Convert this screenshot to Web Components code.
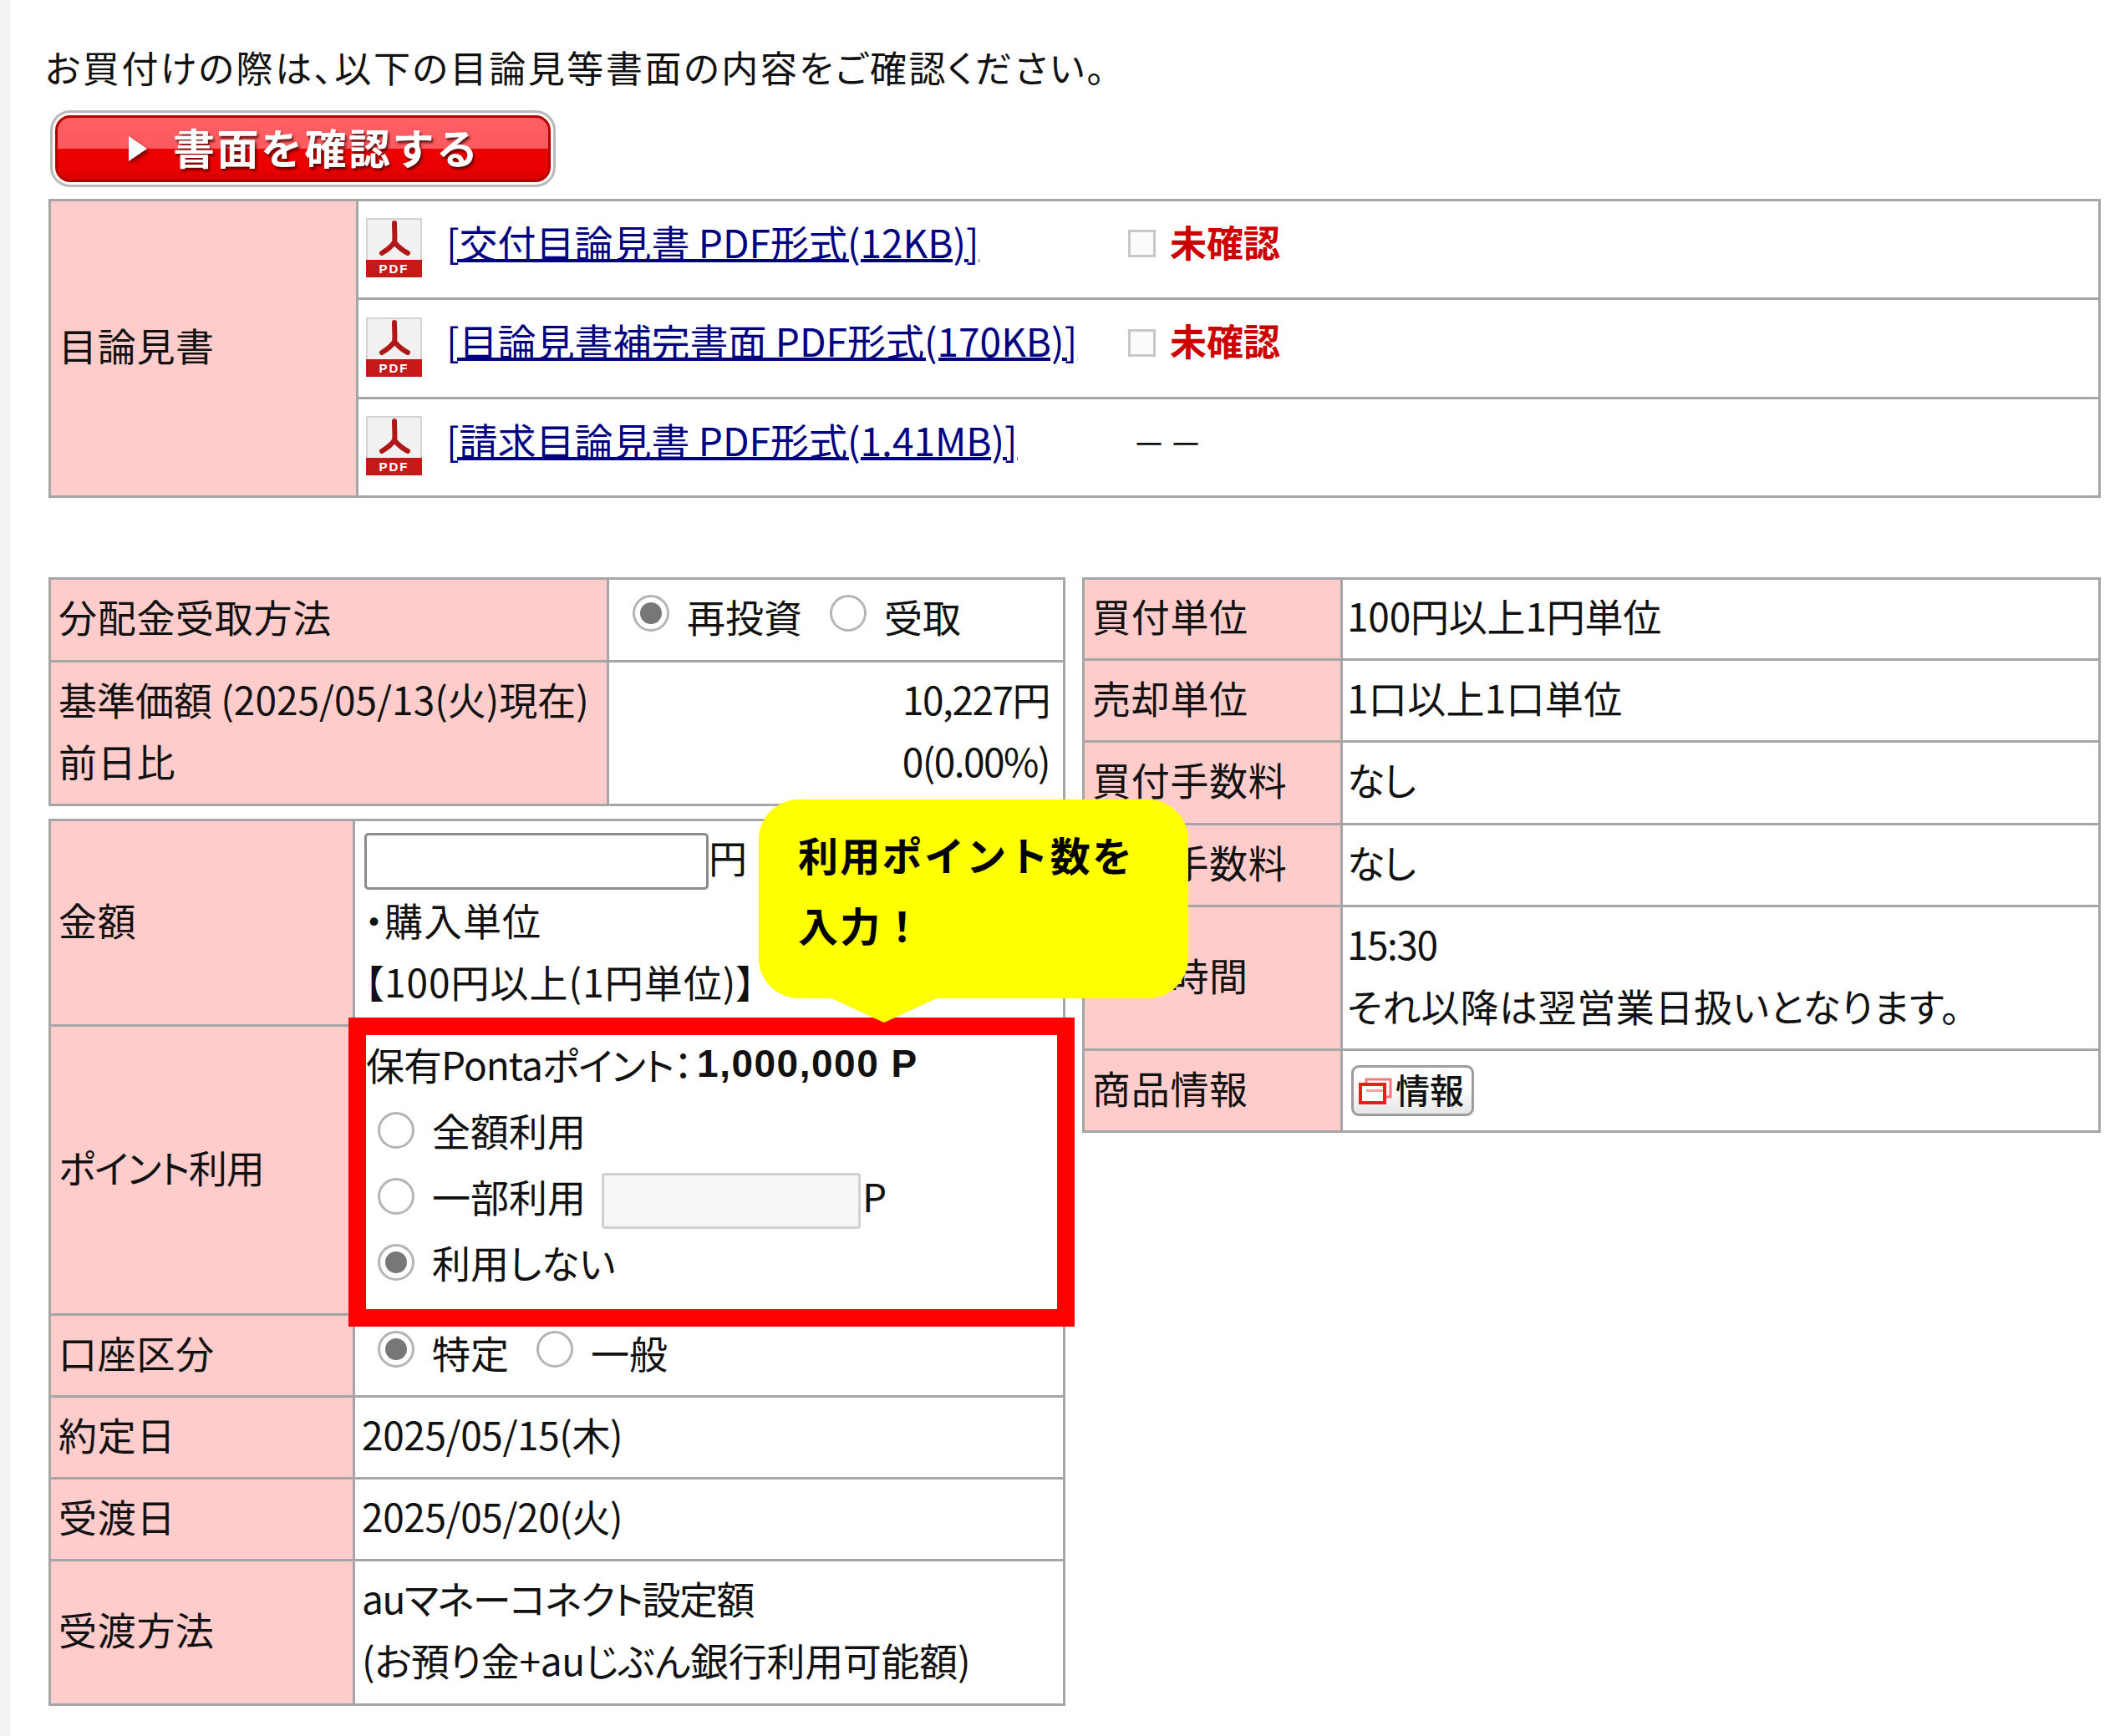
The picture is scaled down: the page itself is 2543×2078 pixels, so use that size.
<!DOCTYPE html>
<html lang="ja">
<head>
<meta charset="utf-8">
<title>書面確認</title>
<style>
  html, body { margin: 0; background: #fff; }
</style>
</head>
<body>
<purchase-page>
  <notice-line>お買付けの際は、以下の目論見等書面の内容をご確認ください。</notice-line>
  <confirm-button>書面を確認する</confirm-button>

  <data-table style="--label-w:368px">
    <data-row h="355" flush>
      <span slot="label">目論見書</span>
      <doc-line h="118" status="unread">[交付目論見書 PDF形式(12KB)]</doc-line>
      <doc-line h="119" status="unread">[目論見書補完書面 PDF形式(170KB)]</doc-line>
      <doc-line h="115" status="none" last>[請求目論見書 PDF形式(1.41MB)]</doc-line>
    </data-row>
  </data-table>

  <two-columns slot="columns">
    <column-stack slot="left">
      <data-table style="--label-w:668px">
        <data-row h="99">
          <span slot="label">分配金受取方法</span>
          <option-group style="--first:20px;--next:33px">
            <radio-option checked>再投資</radio-option>
            <radio-option>受取</radio-option>
          </option-group>
        </data-row>
        <data-row h="172" end>
          <span slot="label"><tight-text style="--ls:0">基準価額 (2025/05/13(火)現在)</tight-text><br>前日比</span>
          <tight-text>10,227円</tight-text>
          <tight-text>0(0.00%)</tight-text>
        </data-row>
      </data-table>
      <data-table style="--label-w:364px">
        <data-row h="246" flush>
          <span slot="label">金額</span>
          <amount-field>円</amount-field>
          <indent-line>・購入単位</indent-line>
          <indent-line>【100円以上(1円単位)】</indent-line>
        </data-row>
        <data-row h="346" flush>
          <span slot="label"><tight-text style="--ls:-1.3px">ポイント利用</tight-text></span>
          <ponta-points></ponta-points>
        </data-row>
        <data-row h="98">
          <span slot="label">口座区分</span>
          <option-group style="--first:19px;--next:33px">
            <radio-option checked>特定</radio-option>
            <radio-option>一般</radio-option>
          </option-group>
        </data-row>
        <data-row h="98">
          <span slot="label">約定日</span>
          <tight-text style="--ls:-.4px">2025/05/15(木)</tight-text>
        </data-row>
        <data-row h="98">
          <span slot="label">受渡日</span>
          <tight-text style="--ls:-.4px">2025/05/20(火)</tight-text>
        </data-row>
        <data-row h="173">
          <span slot="label">受渡方法</span>
          <tight-text>auマネーコネクト設定額</tight-text>
          <tight-text style="--ls:-.3px">(お預り金+auじぶん銀行利用可能額)</tight-text>
        </data-row>
      </data-table>
    </column-stack>
    <column-stack slot="right">
      <data-table style="--label-w:309px">
        <data-row h="97" tight><span slot="label">買付単位</span><tight-text style="--ls:-.2px">100円以上1円単位</tight-text></data-row>
        <data-row h="98" tight><span slot="label">売却単位</span><tight-text style="--ls:.3px">1口以上1口単位</tight-text></data-row>
        <data-row h="99" tight><span slot="label">買付手数料</span><tight-text>なし</tight-text></data-row>
        <data-row h="98" tight><span slot="label">売却手数料</span><tight-text>なし</tight-text></data-row>
        <data-row h="172" tight>
          <span slot="label">締切時間</span>
          <tight-text>15:30</tight-text>
          <tight-text style="--ls:.6px">それ以降は翌営業日扱いとなります。</tight-text>
        </data-row>
        <data-row h="98" tight><span slot="label">商品情報</span><info-button>情報</info-button></data-row>
      </data-table>
    </column-stack>
  </two-columns>

  <highlight-frame slot="overlay"></highlight-frame>
  <callout-bubble slot="overlay">利用ポイント数を<br>入力！</callout-bubble>
</purchase-page>

<script>
// shared text settings for every table cell
const FONT = `"Noto Sans CJK JP", "Liberation Sans", sans-serif`;
const LINE = '#a6a6a6';

function define(name, css, html, extra = {}) {
    class Comp extends HTMLElement {
        connectedCallback() {
            if (this.shadowRoot) return;
            this.attachShadow({ mode: 'open' });
            const markup = typeof html === 'function' ? html(this) : html;
            this.shadowRoot.innerHTML = `<style>${css}</style>${markup}`;
            if (extra.ready) extra.ready(this);
        }
    }
    customElements.define(name, Comp);
}

define('purchase-page', `
    :host {
        display: block;
        position: relative;
        box-sizing: border-box;
        width: 2543px;
        height: 2078px;
        padding: 33px 29px 0 58px;
        font: 400 46px/74px ${FONT};
        font-feature-settings: "palt";
        color: #111;
        background: #fff;
    }
    .strip { position: absolute; left: 0; top: 0; bottom: 0; width: 13px; background: #f2f2f2; }
    .columns { margin-top: 95px; }
`, `
    <div class="strip"></div>
    <slot></slot>
    <div class="columns"><slot name="columns"></slot></div>
    <slot name="overlay"></slot>
`);

define('notice-line', `
    :host {
        display: block;
        box-sizing: border-box;
        height: 100px;
        padding-bottom: 6px;
        line-height: 94px;
        margin-left: -4px;
        font-size: 44px;
        letter-spacing: 2.6px;
        white-space: nowrap;
    }
`, `<slot></slot>`);

define('confirm-button', `
    :host {
        display: flex;
        align-items: center;
        box-sizing: border-box;
        width: 605px;
        height: 92px;
        margin: -1px 0 14px 2px;
        padding: 3px;
        border: 3px solid #b9b9b9;
        border-radius: 24px;
        background: #fff;
    }
    .face {
        flex: 1;
        display: flex;
        align-items: center;
        height: 100%;
        box-sizing: border-box;
        padding: 0 0 6px 85px;
        border: 3px solid #b80000;
        border-radius: 18px;
        background: linear-gradient(#ff6065 0, #fb5a5e 50%, #ee0000 50%, #e80000 88%, #c80000 100%);
        color: #fff;
        font-weight: 700;
        font-size: 50px;
        letter-spacing: 2.5px;
        text-shadow: 2px 3px 3px rgba(60,0,0,.75);
        font-feature-settings: normal;
    }
    svg { margin: 6px 31px 0 0; filter: drop-shadow(2px 3px 2px rgba(60,0,0,.7)); }
`, `
    <div class="face">
        <svg width="22" height="30" viewBox="0 0 22 30"><path d="M0 0L22 15L0 30Z" fill="#fff"/></svg>
        <slot></slot>
    </div>
`);

define('data-table', `
    :host {
        display: block;
        border: 3px solid ${LINE};
        border-bottom: 0;
        background: #fff;
    }
`, `<slot></slot>`);

define('data-row', `
    :host {
        display: grid;
        grid-template-columns: var(--label-w) 1fr;
        box-sizing: border-box;
        border-bottom: 3px solid ${LINE};
    }
    .label {
        display: flex;
        align-items: center;
        box-sizing: border-box;
        padding: 0 0 10px 9px;
        background: #ffcccc;
        border-right: 3px solid ${LINE};
        text-align: left;
        letter-spacing: .7px;
        white-space: nowrap;
    }
    .value {
        display: flex;
        flex-direction: column;
        justify-content: center;
        box-sizing: border-box;
        padding: 0 8px 10px;
        white-space: nowrap;
    }
    :host([end]) .value { align-items: flex-end; padding-right: 16px; }
    :host([tight]) .value { padding-left: 5px; }
    :host([flush]) .value { justify-content: flex-start; padding: 0; }
`, host => `
    <div class="label" part="label"><slot name="label"></slot></div>
    <div class="value" part="value"><slot></slot></div>
`, { ready: host => { host.style.height = host.getAttribute('h') + 'px'; } });

define('tight-text', `
    :host { letter-spacing: var(--ls, -1.5px); }
`, `<slot></slot>`);

define('indent-line', `
    :host { display: block; padding-left: 11px; letter-spacing: 1px; white-space: nowrap; }
`, `<slot></slot>`);

define('doc-line', `
    :host {
        display: flex;
        align-items: center;
        box-sizing: border-box;
        padding: 0 0 20px 9px;
        border-bottom: 3px solid ${LINE};
    }
    :host([last]) { border-bottom: 0; }
    a { margin-left: 29px; width: 816px; color: #000080; text-decoration: underline; text-underline-offset: 1px; white-space: nowrap; }
    .box { width: 33px; height: 33px; box-sizing: border-box; border: 3px solid #c8c8c8; background: #fbfbfb; margin-right: 17px; margin-top: 6px; }
    .unread { color: #cc0000; font-weight: 700; font-size: 44px; }
    .dash { margin: 7px 0 0 5px; letter-spacing: 4px; font-size: 40px; }
    pdf-icon { margin-top: 16px; }
`, host => {
    const status = host.getAttribute('status');
    host.style.height = host.getAttribute('h') + 'px';
    const tail = status === 'unread'
        ? `<span class="box"></span><span class="unread">未確認</span>`
        : `<span class="dash">－－</span>`;
    return `<pdf-icon></pdf-icon><a href="#"><slot></slot></a>${tail}`;
});

define('pdf-icon', `
    :host {
        display: flex;
        flex-direction: column;
        flex: none;
        width: 67px;
        height: 71px;
        box-sizing: border-box;
        background: #f1f1f1;
        border: 2px solid #d4d4d4;
        border-bottom: 0;
    }
    svg { flex: 1; display: block; margin: 0 auto; }
    .band {
        margin: 0 -2px;
        height: 21px;
        background: #c41a1a;
        color: #fff;
        font: 700 15px/21px "Liberation Sans", sans-serif;
        letter-spacing: 2px;
        text-align: center;
    }
`, `
    <svg width="48" height="48" viewBox="0 0 48 48">
        <path d="M24 4C24 14 25 22 24 27M24 27C20 33 14 37 9 40M24 27C29 33 34 37 40 40" fill="none" stroke="#b01818" stroke-width="6" stroke-linecap="round"/>
    </svg>
    <div class="band">PDF</div>
`);

define('two-columns', `
    :host { display: grid; grid-template-columns: 1217px 1fr; gap: 20px; }
`, `<slot name="left"></slot><slot name="right"></slot>`);

define('column-stack', `
    :host { display: flex; flex-direction: column; gap: 15px; }
`, `<slot></slot>`);

define('radio-dot', `
    :host {
        display: inline-flex;
        align-items: center;
        justify-content: center;
        flex: none;
        width: 44px;
        height: 44px;
        box-sizing: border-box;
        border: 3px solid #b5b5b5;
        border-radius: 50%;
        background: #fff;
    }
    :host([checked]) i { display: block; width: 26px; height: 26px; border-radius: 50%; background: #777; }
`, `<i></i>`);

define('radio-option', `
    :host { display: inline-flex; align-items: center; gap: 21px; white-space: nowrap; }
    radio-dot { position: relative; top: var(--dot-top, -3px); }
`, host => `<radio-dot ${host.hasAttribute('checked') ? 'checked' : ''}></radio-dot><span><slot></slot></span>`);

define('option-group', `
    :host { display: flex; padding-left: var(--first); }
    ::slotted(*:not(:first-child)) { margin-left: var(--next); }
`, `<slot></slot>`);

define('amount-field', `
    :host { display: flex; align-items: center; height: 68px; margin: 14px 0 -2px 11px; }
    .box {
        width: 412px;
        height: 68px;
        box-sizing: border-box;
        border: 3px solid #8c8c8c;
        border-radius: 5px;
        background: #fff;
    }
    span { margin-top: -12px; }
`, `<div class="box"></div><span><slot></slot></span>`);

define('ponta-points', `
    :host {
        display: flex;
        flex-direction: column;
        height: 100%;
        box-sizing: border-box;
        padding: 4px 0 0 13px;
        --dot-top: 1px;
    }
    .line { display: flex; align-items: center; height: 79px; padding-left: 14px; }
    .head { padding-left: 0; letter-spacing: -1px; }
    b { font: 700 46px "Liberation Sans", sans-serif; margin-left: 6px; letter-spacing: 1.5px; }
    .field {
        width: 310px;
        height: 67px;
        box-sizing: border-box;
        margin: 14px 2px 0 19px;
        border: 3px solid #d0d0d0;
        border-radius: 4px;
        background: #f7f7f7;
    }
`, `
    <div class="line head">保有Pontaポイント：<b>1,000,000 P</b></div>
    <div class="line"><radio-option>全額利用</radio-option></div>
    <div class="line"><radio-option>一部利用</radio-option><div class="field"></div>P</div>
    <div class="line"><radio-option checked>利用しない</radio-option></div>
`);

define('info-button', `
    :host {
        display: flex;
        align-items: center;
        align-self: flex-start;
        box-sizing: border-box;
        width: 147px;
        height: 61px;
        margin: 10px 0 0 5px;
        padding: 0 0 6px 6px;
        border: 3px solid #9c9c9c;
        border-radius: 9px;
        background: linear-gradient(#fff 40%, #e6e6e6);
        font-size: 41px;
        font-weight: 500;
        letter-spacing: 0;
    }
    svg { margin: 6px 4px 0 0; }
`, `
    <svg width="40" height="34" viewBox="0 0 40 34" fill="none">
        <path d="M9 8V3H38V24H31" stroke="#f27a7a" stroke-width="3"/>
        <rect x="2" y="9" width="29" height="22" fill="#fff" stroke="#ee1c1c" stroke-width="4"/>
        <rect x="9" y="15" width="20" height="3" fill="#f7a0a0"/>
    </svg>
    <slot></slot>
`);

define('highlight-frame', `
    :host {
        position: absolute;
        left: 417px;
        top: 1218px;
        width: 869px;
        height: 370px;
        box-sizing: border-box;
        border: 21px solid #ff0000;
        pointer-events: none;
    }
`, ``);

define('callout-bubble', `
    :host {
        position: absolute;
        left: 908px;
        top: 957px;
        width: 514px;
        height: 238px;
        box-sizing: border-box;
        padding: 23px 0 0 47px;
        border-radius: 48px;
        background: #ffff00;
        color: #000;
        font-weight: 700;
        font-size: 48px;
        line-height: 84px;
        letter-spacing: 2.3px;
        font-feature-settings: normal;
    }
    .tail {
        position: absolute;
        left: 87px;
        top: 238px;
        width: 126px;
        height: 29px;
        background: #ffff00;
        clip-path: polygon(0 0, 100% 0, 50% 100%);
    }
`, `<slot></slot><div class="tail"></div>`);
</script>
</body>
</html>
